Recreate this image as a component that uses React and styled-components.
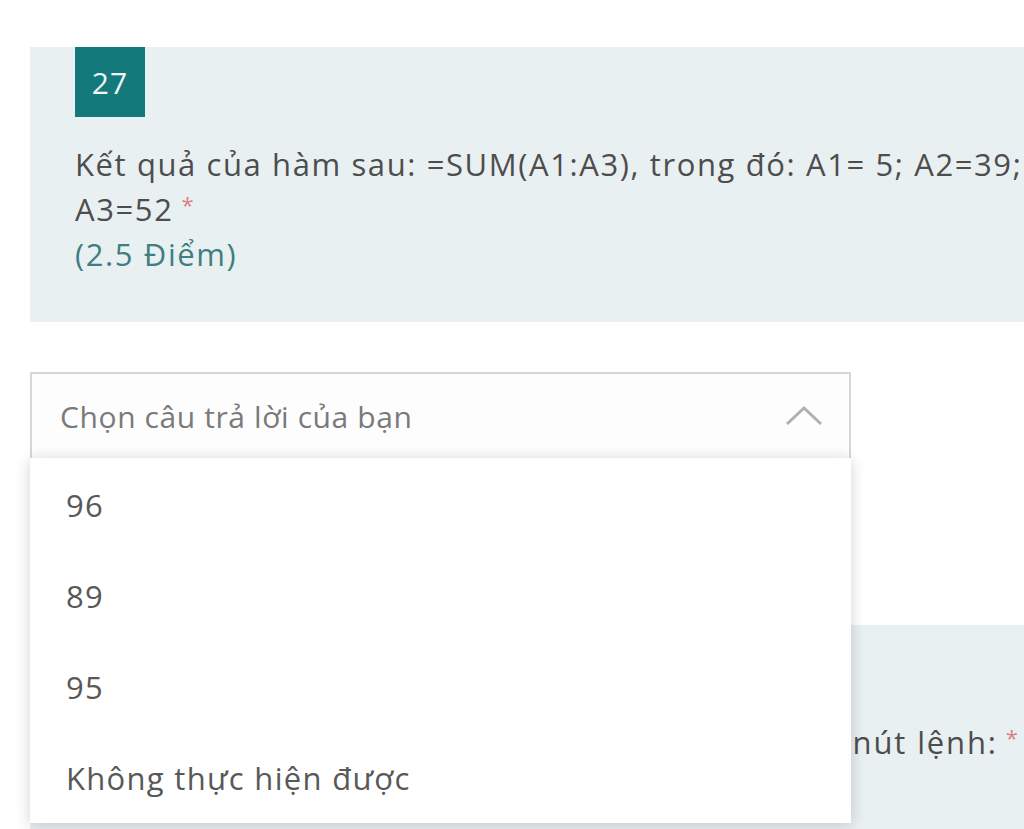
import React from "react";
import styled, { createGlobalStyle } from "styled-components";

const GlobalStyle = createGlobalStyle`
  html, body {
    margin: 0;
    padding: 0;
    background: #ffffff;
    overflow: hidden;
  }
  body {
    font-family: "Open Sans", "Noto Sans", sans-serif;
  }
`;

const Page = styled.div`
  width: 1024px;
  height: 829px;
  overflow: hidden;
  padding: 47px 0 0 30px;
  box-sizing: border-box;
`;

const QuestionCard = styled.div`
  width: 1120px;
  min-height: 275px;
  box-sizing: border-box;
  background: #e9f0f2;
  padding: 0 0 0 45px;
  margin-top: ${(p) => p.$gap || 0}px;
`;

const Badge = styled.div`
  width: 70px;
  height: 70px;
  background: #13797a;
  color: #eef6f6;
  display: flex;
  align-items: center;
  justify-content: center;
  font-size: 30px;
  letter-spacing: 1px;
`;

const Title = styled.div`
  margin-top: 25px;
  font-size: 31px;
  line-height: 45px;
  color: #4d4d4d;
  letter-spacing: ${(p) => p.$ls || 1.6}px;
  width: 990px;
`;

const Star = styled.span`
  color: #df7d89;
  font-size: 22px;
  line-height: 1;
  vertical-align: 8px;
  margin-left: 8px;
`;

const Points = styled.div`
  color: #3f7f80;
`;

const DropdownWrap = styled.div`
  position: relative;
  width: 821px;
  margin-top: 50px;
  z-index: 2;
`;

const Select = styled.div`
  height: 86px;
  box-sizing: border-box;
  border: 2px solid #d6d6d6;
  border-bottom: none;
  background: #fdfdfd;
  display: flex;
  align-items: center;
  justify-content: space-between;
  padding: 0 26px 0 28px;
  font-size: 30px;
  color: #7a7a7a;
  letter-spacing: 0.6px;
`;

const Menu = styled.div`
  position: absolute;
  top: 86px;
  left: 0;
  width: 821px;
  background: #ffffff;
  box-shadow: 0 2px 14px rgba(0, 0, 0, 0.18);
  padding-top: 1px;
`;

const Option = styled.div`
  height: 91px;
  display: flex;
  align-items: center;
  padding-left: 36px;
  font-size: 31px;
  color: #585858;
  letter-spacing: 1.3px;
`;

const Chevron = () => (
  <svg width="38" height="22" viewBox="0 0 38 22">
    <path d="M2 19 L19 3 L36 19" fill="none" stroke="#b0b0b0" strokeWidth="3" />
  </svg>
);

const options = ["96", "89", "95", "Không thực hiện được"];

export default function App() {
  return (
    <>
      <GlobalStyle />
      <Page>
        <QuestionCard>
          <Badge>27</Badge>
          <Title>
            Kết quả của hàm sau: =SUM(A1:A3), trong đó: A1= 5; A2=39; A3=52
            <Star>*</Star>
            <Points>(2.5 Điểm)</Points>
          </Title>
        </QuestionCard>

        <DropdownWrap>
          <Select>
            <span>Chọn câu trả lời của bạn</span>
            <Chevron />
          </Select>
          <Menu>
            {options.map((o) => (
              <Option key={o}>{o}</Option>
            ))}
          </Menu>
        </DropdownWrap>

        <QuestionCard $gap={167}>
          <Badge>28</Badge>
          <Title $ls={1.85}>
            Để chèn thêm một hàng vào trang tính, ta dùng nút lệnh:
            <Star>*</Star>
          </Title>
        </QuestionCard>
      </Page>
    </>
  );
}
